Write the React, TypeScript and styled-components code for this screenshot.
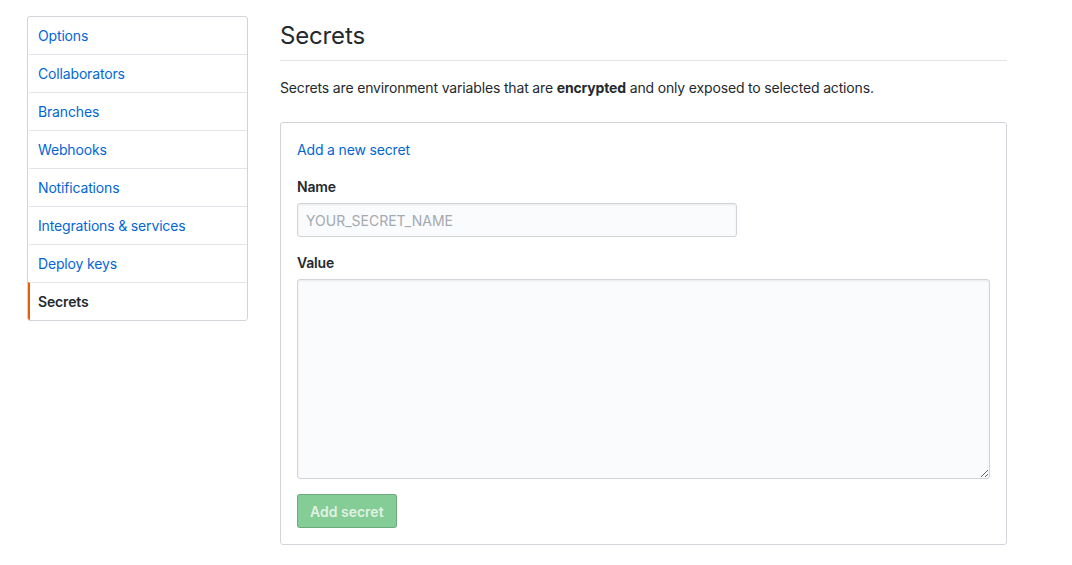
import React from 'react'
import styled, { createGlobalStyle } from 'styled-components'

const GlobalStyle = createGlobalStyle`
    body {
        margin: 0;
        background: #fff;
        font-family: Inter, "Liberation Sans", Arial, sans-serif;
        font-size: 14px;
        letter-spacing: -0.16px;
        color: #24292e;
    }
    * { box-sizing: border-box; }
`

const Page = styled.div`
    display: flex;
    align-items: flex-start;
    gap: 32px;
    padding: 16px 0 0 27px;
`

const Menu = styled.nav`
    width: 221px;
    border: 1px solid #d1d5da;
    border-radius: 3px;
    overflow: hidden;
    display: flex;
    flex-direction: column;
`

const MenuItem = styled.a<{ $active?: boolean }>`
    display: block;
    height: 38px;
    line-height: 37px;
    padding: 0 8px;
    border-top: 1px solid #e1e4e8;
    border-left: 2px solid ${(p) => (p.$active ? '#e36209' : 'transparent')};
    color: ${(p) => (p.$active ? '#24292e' : '#0366d6')};
    font-weight: ${(p) => (p.$active ? 600 : 400)};
    text-decoration: none;
    &:first-child {
        height: 37px;
        border-top: none;
        line-height: 38px;
    }
`

const Main = styled.main`
    width: 727px;
`

const Heading = styled.h2`
    margin: 0;
    padding: 5px 0 10px;
    font-size: 24px;
    font-weight: 400;
    line-height: 29px;
    border-bottom: 1px solid #e1e4e8;
`

const Lead = styled.p`
    margin: 17px 0 24px;
    line-height: 20px;
`

const Box = styled.div`
    border: 1px solid #d1d5da;
    border-radius: 3px;
    padding: 17px 16px 16px;
`

const BoxTitle = styled.a`
    display: block;
    color: #0366d6;
    text-decoration: none;
    line-height: 20px;
    margin-bottom: 17px;
`

const Label = styled.label`
    display: block;
    font-weight: 600;
    line-height: 20px;
    margin-bottom: 6px;
`

const Field = styled.div<{ $space: number }>`
    margin-bottom: ${(p) => p.$space}px;
`

const TextInput = styled.input`
    display: block;
    width: 440px;
    height: 34px;
    padding: 6px 8px;
    font: inherit;
    font-size: 14px;
    color: #24292e;
    background: #fafbfc;
    border: 1px solid #d1d5da;
    border-radius: 3px;
    box-shadow: inset 0 1px 2px rgba(27, 31, 35, 0.075);
    &::placeholder {
        color: #a3aab1;
    }
`

const TextArea = styled.textarea`
    display: block;
    width: 100%;
    height: 200px;
    padding: 6px 8px;
    font: inherit;
    background: #fafbfc;
    border: 1px solid #d1d5da;
    border-radius: 3px;
    box-shadow: inset 0 1px 2px rgba(27, 31, 35, 0.075);
`

const SubmitButton = styled.button`
    height: 34px;
    padding: 0 12px;
    font: inherit;
    font-weight: 600;
    color: rgba(255, 255, 255, 0.75);
    background: #85cd96;
    border: 1px solid rgba(27, 31, 35, 0.2);
    border-radius: 3px;
`

const items = [
    'Options',
    'Collaborators',
    'Branches',
    'Webhooks',
    'Notifications',
    'Integrations & services',
    'Deploy keys',
    'Secrets',
]

export default function App() {
    return (
        <Page>
            <GlobalStyle />
            <Menu>
                {items.map((name) => (
                    <MenuItem key={name} href='#' $active={name === 'Secrets'}>
                        {name}
                    </MenuItem>
                ))}
            </Menu>
            <Main>
                <Heading>Secrets</Heading>
                <Lead>
                    Secrets are environment variables that are <strong>encrypted</strong> and only exposed to selected
                    actions.
                </Lead>
                <Box>
                    <BoxTitle href='#'>Add a new secret</BoxTitle>
                    <Field $space={16}>
                        <Label>Name</Label>
                        <TextInput placeholder='YOUR_SECRET_NAME' />
                    </Field>
                    <Field $space={15}>
                        <Label>Value</Label>
                        <TextArea />
                    </Field>
                    <SubmitButton disabled>Add secret</SubmitButton>
                </Box>
            </Main>
        </Page>
    )
}
